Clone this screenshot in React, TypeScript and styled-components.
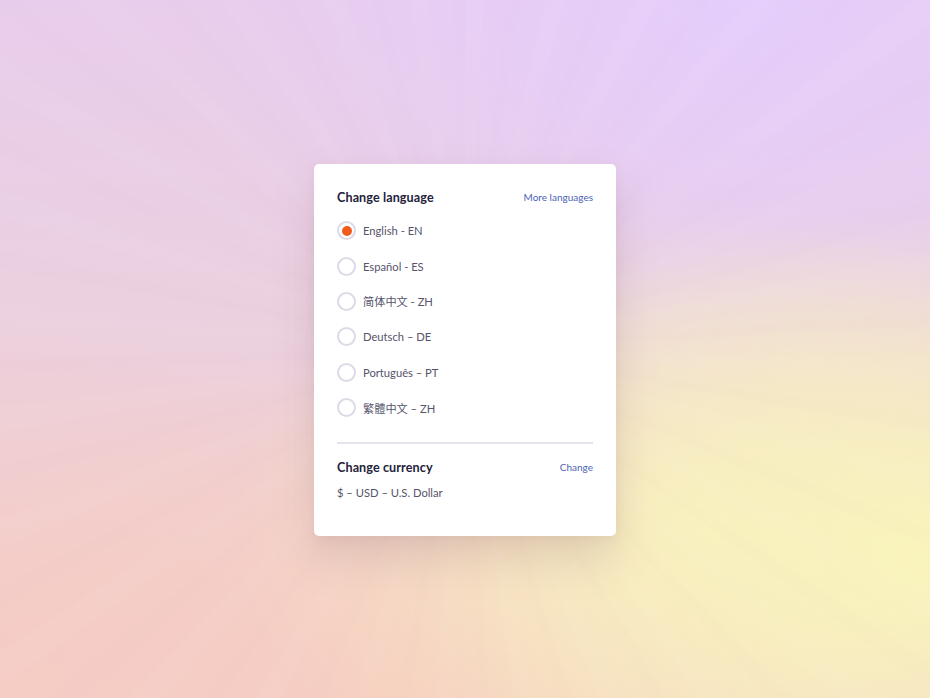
import React, { useState } from "react";
import styled, { createGlobalStyle } from "styled-components";

const Global = createGlobalStyle`
  html, body { margin: 0; padding: 0; }
  body { font-family: "Lato", "Noto Sans CJK SC", sans-serif; -webkit-font-smoothing: antialiased; }
`;

const Page = styled.div`
  position: relative;
  width: 930px;
  height: 698px;
  overflow: hidden;
  display: flex;
  align-items: flex-start;
  justify-content: center;
  background:
    radial-gradient(ellipse 55% 50% at 100% 80%, rgba(250, 246, 186, 0.95), rgba(250, 246, 186, 0) 100%),
    radial-gradient(ellipse 50% 45% at 75% 75%, rgba(249, 243, 190, 0.8), rgba(249, 243, 190, 0) 100%),
    radial-gradient(ellipse 60% 55% at 0% 100%, rgba(246, 204, 196, 1), rgba(246, 204, 196, 0) 100%),
    radial-gradient(ellipse 55% 50% at 40% 100%, rgba(247, 206, 190, 0.9), rgba(247, 206, 190, 0) 100%),
    radial-gradient(ellipse 60% 60% at 80% 0%, rgba(229, 205, 252, 1), rgba(229, 205, 252, 0) 100%),
    linear-gradient(180deg, #e9cdec 0%, #ebd0df 45%, #f1cfd0 100%);
  &::before {
    content: "";
    position: absolute;
    inset: 0;
    background: repeating-conic-gradient(from 0deg at 465px 350px,
      rgba(255, 255, 255, 0.03) 0deg 3deg,
      rgba(255, 255, 255, 0) 3deg 7deg,
      rgba(180, 140, 170, 0.015) 7deg 9deg,
      rgba(255, 255, 255, 0) 9deg 13deg);
  }
`;

const Card = styled.div`
  position: relative;
  margin-top: 164px;
  width: 302px;
  box-sizing: border-box;
  padding: 22px 23px 37px 23px;
  background: #ffffff;
  border-radius: 5px;
  box-shadow: 0 22px 40px rgba(150, 110, 120, 0.22), 0 4px 10px rgba(150, 110, 130, 0.08);
`;

const HeaderRow = styled.div`
  display: flex;
  align-items: center;
  justify-content: space-between;
  height: 22px;
`;

const Title = styled.h2`
  margin: 0;
  font-size: 12.6px;
  font-weight: 700;
  color: #23223a;
  letter-spacing: 0.1px;
`;

const LinkButton = styled.button`
  border: none;
  background: none;
  padding: 0;
  cursor: pointer;
  font-family: inherit;
  font-size: 10px;
  color: #4c63b6;
`;

const List = styled.div`
  display: flex;
  flex-direction: column;
  margin-top: 5px;
`;

const Option = styled.label`
  display: flex;
  align-items: center;
  gap: 7px;
  height: 35.4px;
  cursor: pointer;
`;

const Radio = styled.span<{ $checked: boolean }>`
  box-sizing: border-box;
  width: 19px;
  height: 19px;
  border-radius: 50%;
  border: 2px solid #dcdae6;
  display: flex;
  align-items: center;
  justify-content: center;
  flex-shrink: 0;
  &::after {
    content: "";
    width: 10px;
    height: 10px;
    border-radius: 50%;
    background: ${(p) => (p.$checked ? "#f05a1c" : "transparent")};
  }
`;

const OptionText = styled.span`
  font-size: 11.2px;
  color: #55546a;
  font-family: "Lato", "Noto Sans CJK SC", sans-serif;
`;

const Divider = styled.hr`
  border: none;
  height: 2px;
  background: #e5e4ec;
  margin: 17px 0 12px;
`;

const Value = styled.div`
  margin-top: 8px;
  font-size: 11.2px;
  color: #55546a;
`;

const languages = [
  "English - EN",
  "Español - ES",
  "简体中文 - ZH",
  "Deutsch – DE",
  "Português – PT",
  "繁體中文 – ZH",
];

export default function App() {
  const [selected, setSelected] = useState(0);
  return (
    <Page>
      <Global />
      <Card>
        <HeaderRow>
          <Title>Change language</Title>
          <LinkButton>More languages</LinkButton>
        </HeaderRow>
        <List>
          {languages.map((l, i) => (
            <Option key={l} onClick={() => setSelected(i)}>
              <Radio $checked={selected === i} />
              <OptionText>{l}</OptionText>
            </Option>
          ))}
        </List>
        <Divider />
        <HeaderRow>
          <Title>Change currency</Title>
          <LinkButton>Change</LinkButton>
        </HeaderRow>
        <Value>$ – USD – U.S. Dollar</Value>
      </Card>
    </Page>
  );
}
